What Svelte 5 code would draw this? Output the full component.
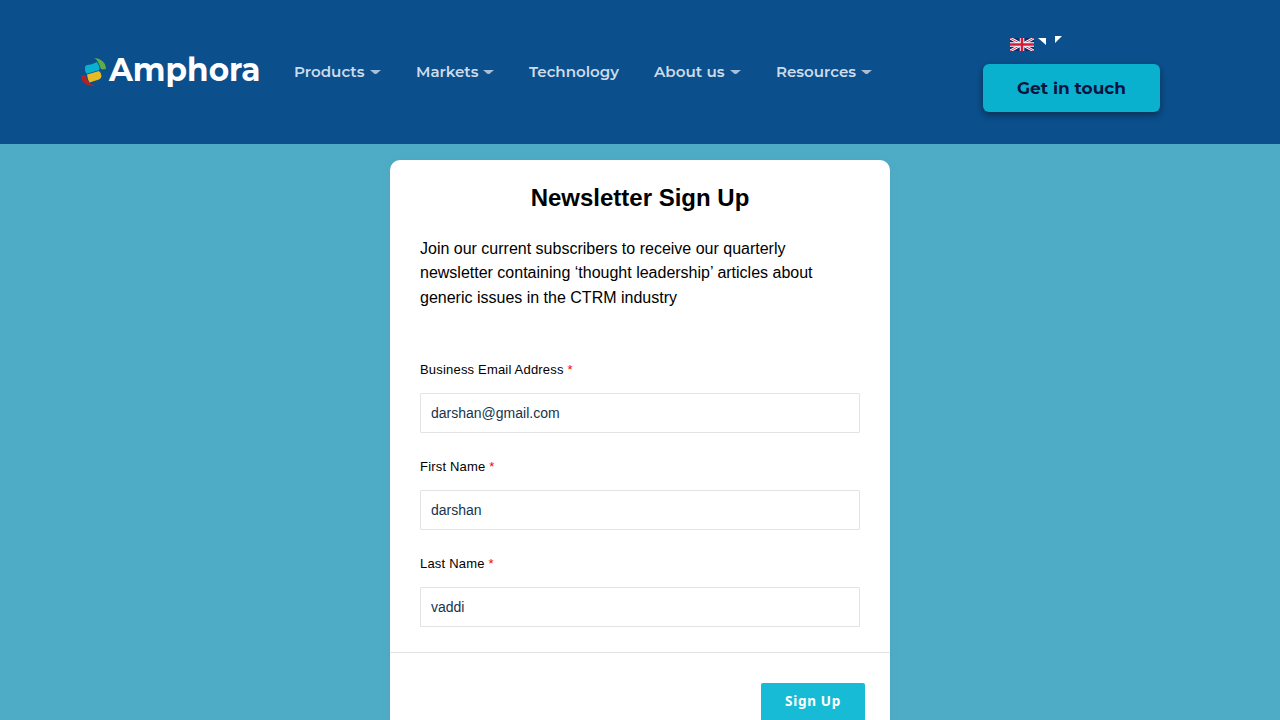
<script>
  const nav = [
    { label: 'Products', width: 70.5, menu: true },
    { label: 'Markets', width: 62.5, menu: true },
    { label: 'Technology', width: 90, menu: false },
    { label: 'About us', width: 70.5, menu: true },
    { label: 'Resources', width: 80, menu: true }
  ];
  let fields = $state([
    { id: 'email', label: 'Business Email Address', value: 'darshan@gmail.com' },
    { id: 'first', label: 'First Name', value: 'darshan' },
    { id: 'last', label: 'Last Name', value: 'vaddi' }
  ]);
</script>

<div class="page">
  <header>
    <a class="logo" href="#home" aria-label="Amphora">
      <svg width="182" height="38" viewBox="0 0 182 38">
        <path d="M14 5C20 5 26 9 26 16L22 16.500C20 15.500 20 12 18 9C17 7 16 6 14 5Z" fill="#5fad46" />
        <path d="M1 22.500L5 22C7 27 9 31 16 33C8 34 1 30 1 22.500Z" fill="#b52025" />
        <path d="M7.500 12Q11 12 17 9Q19 12 19.500 15Q20 17 18 17.500L6.500 20.800Q4.500 18 5 14Q5.500 12 7.500 12Z" fill="#08b1d0" />
        <path d="M7 21.500L19 18Q21.500 20 21.500 23Q21.500 25.500 19 26.500L9.500 29.500Q7.500 26 7 21.500Z" fill="#e9bb22" />
        <text x="29" y="28.300" textLength="151.500" lengthAdjust="spacingAndGlyphs">Amphora</text>
      </svg>
    </a>
    <nav>
      {#each nav as item}
        <a href="#nav">
          <svg width={item.width} height="24"><text x="0" y="17" textLength={item.width} lengthAdjust="spacingAndGlyphs">{item.label}</text></svg>
          {#if item.menu}
            <svg class="caret" width="11" height="5" viewBox="0 0 11 5"><path d="M0 0H11Q9.500 1 8 2.500Q5.500 5.500 3 2.500Q1.500 1 0 0Z" /></svg>
          {/if}
        </a>
      {/each}
    </nav>
    <div class="actions">
      <div class="language">
        <svg class="flag" width="24" height="13" viewBox="0 0 24 13">
          <rect width="24" height="13" fill="#10296a" />
          <path d="M0 0L24 13M24 0L0 13" stroke="#fff" stroke-width="2.800" />
          <path d="M0 0L24 13M24 0L0 13" stroke="#d51a3c" stroke-width=".9" />
          <path d="M12 0V13M0 6.500H24" stroke="#fff" stroke-width="4.500" />
          <path d="M12 0V13M0 6.500H24" stroke="#d51a3c" stroke-width="2.600" />
        </svg>
        <svg width="25" height="13" viewBox="0 0 25 13"><path d="M0 2H8V9ZM17 0H24L17 7Z" fill="#fff" /></svg>
      </div>
      <a class="contact" href="#contact">
        <svg width="109" height="24"><text x="0" y="18" textLength="109" lengthAdjust="spacingAndGlyphs">Get in touch</text></svg>
      </a>
    </div>
  </header>
  <main>
    <form>
      <div class="content">
        <h1>Newsletter Sign Up</h1>
        <p>Join our current subscribers to receive our quarterly newsletter containing ‘thought leadership’ articles about generic issues in the CTRM industry</p>
        {#each fields as field}
          <div class="field">
            <label for={field.id}>{field.label} <span>*</span></label>
            <input id={field.id} bind:value={field.value} />
          </div>
        {/each}
      </div>
      <footer><button type="button">Sign Up</button></footer>
    </form>
  </main>
</div>

<style>
  :global(body) { margin: 0; overflow: hidden; }
  * { box-sizing: border-box; }
  .page { height: 720px; overflow: hidden; background: #4facc7; font-family: "Liberation Sans", Arial, sans-serif; color: #000; }
  header { display: flex; height: 144px; background: #0b4f8c; font-family: Montserrat, Inter, sans-serif; }
  a { text-decoration: none; }
  svg { display: block; flex: none; overflow: visible; }
  .logo { padding: 53px 0 0 80px; }
  .logo text { fill: #fff; font-weight: 700; font-size: 32px; }
  nav { display: flex; gap: 35px; padding: 60px 0 0 32px; height: 84px; }
  nav a { display: flex; gap: 5.200px; align-items: center; }
  nav text { fill: #cddcea; font-weight: 600; font-size: 15px; }
  .caret path { fill: #a9bfd8; }
  .actions { margin-left: auto; padding: 36px 120px 0 0; }
  .language { display: flex; align-items: flex-start; height: 28px; padding-left: 27px; gap: 4px; }
  .flag { margin-top: 2px; overflow: hidden; }
  .contact { display: flex; justify-content: center; align-items: center; width: 177px; height: 48px; border-radius: 6px; background: #09b1ce; box-shadow: 0 3px 7px rgba(0, 0, 0, .4); }
  .contact text { fill: #0a1440; font-weight: 700; font-size: 17px; }
  main { padding-top: 16px; }
  form { width: 500px; height: 620px; margin: 0 auto; background: #fff; border-radius: 10px; box-shadow: 0 0 14px rgba(0, 0, 0, .035); }
  .content { height: 493px; padding: 20px 30px 0; border-bottom: 1px solid #e2e2e2; }
  h1 { margin: 0; text-align: center; font-size: 24px; line-height: 36px; font-weight: 700; }
  p { margin: 20.800px 0 44.800px; font-size: 16px; line-height: 24.480px; }
  .field { height: 97px; }
  label { display: block; height: 38px; font-size: 13px; line-height: 26px; padding-top: 2px; letter-spacing: .19px; }
  label span { color: #f00; }
  input { display: block; width: 440px; height: 40px; padding: 0 10px; border: 1px solid #e3e3e3; border-radius: 1px; background: #fff; color: #17334d; font: 14px "Liberation Sans", Arial, sans-serif; outline: 0; }
  footer { display: flex; justify-content: flex-end; padding: 30px 25px 0; }
  button { width: 104px; height: 38px; padding: 0 0 2px; border: 0; border-radius: 2px; background: #18bbd6; color: #fff; font: 700 13.500px "Noto Sans", sans-serif; letter-spacing: .7px; }
</style>
